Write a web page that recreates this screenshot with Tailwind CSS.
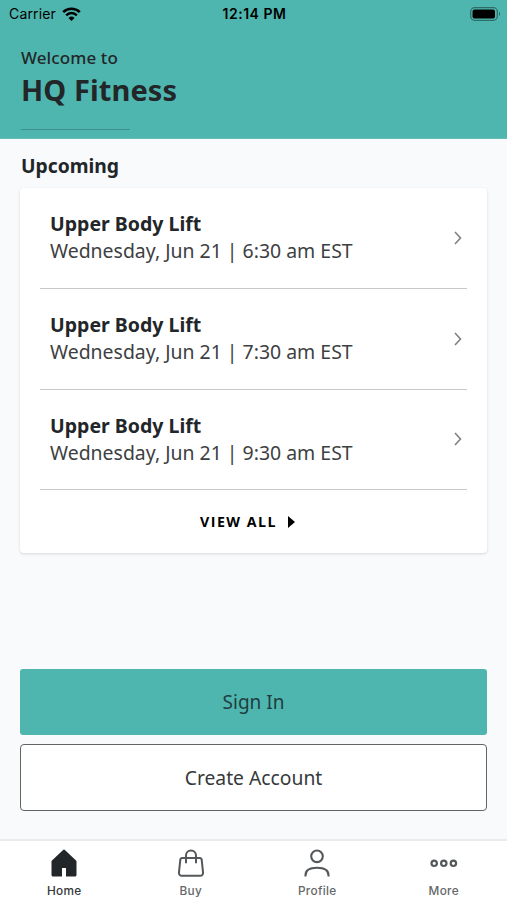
<!DOCTYPE html>
<html lang="en">
<head>
<meta charset="utf-8">
<title>HQ Fitness</title>
<script src="https://cdn.jsdelivr.net/npm/@tailwindcss/browser@4"></script>
</head>
<body class="w-[507px] h-[900px] overflow-hidden bg-[#f8fafb] font-['Noto_Sans',sans-serif] text-[#222629] flex flex-col">
  <header class="h-[139px] shrink-0 bg-[#4fb6af] flex flex-col border-b border-[#64bdb8]">
    <div class="h-7 grid grid-cols-3 items-center pl-[9px] pr-[6px] text-black font-['Inter',sans-serif] text-[14px] leading-7">
      <div class="flex items-center gap-[6px]">
        <span class="tracking-[0.15px]">Carrier</span>
        <svg class="w-[19px] h-[14px]" viewBox="0 0 19 14"><g fill="none" stroke="#000" stroke-width="2.5"><path d="M1.2 5.1a11.8 11.8 0 0 1 16.6 0"/><path d="M4.2 8.3a7.5 7.5 0 0 1 10.6 0"/></g><path d="M9.5 14 6.5 10.9a4.3 4.3 0 0 1 6 0Z"/></svg>
      </div>
      <span class="text-center font-semibold tracking-[0.5px] -ml-[1px]">12:14 PM</span>
      <svg class="w-[31px] h-[14px] justify-self-end" viewBox="0 0 31 14"><rect x=".7" y=".7" width="26.6" height="12.6" rx="4" fill="none" stroke="#000" stroke-opacity=".4" stroke-width="1.3"/><rect x="2.5" y="2.5" width="22.5" height="9" rx="2"/><path d="M29 4.8q2 2.2 0 4.4Z" fill-opacity=".45"/></svg>
    </div>
    <div class="px-[21px] pt-[18px]">
      <p class="text-[17px] leading-6 font-medium tracking-[0.1px]">Welcome to</p>
      <h1 class="text-[29px] leading-10 font-bold tracking-[0.1px]">HQ Fitness</h1>
      <div class="w-[109px] h-px mt-[19px] bg-[#3e918e]"></div>
    </div>
  </header>
  <main class="flex-1 flex flex-col px-5">
    <h2 class="h-[49px] pl-px pt-[13px] text-[19.3px] leading-7 font-bold">Upcoming</h2>
    <section class="h-[365px] shrink-0 bg-white rounded-[4px] px-5 shadow-[0_1px_3px_rgba(0,0,0,0.14)]">
      <div class="h-[101px] border-b border-[#c8c9ca] pl-[10px] pr-[5px] flex items-center justify-between">
        <div class="pb-[2px]"><h3 class="text-[19.5px] leading-[27px] font-bold">Upper Body Lift</h3><p class="text-[19.45px] leading-[27px] text-[#3d4042]">Wednesday, Jun 21 | 6:30 am EST</p></div>
        <svg class="w-2 h-[14px]" viewBox="0 0 8 14" fill="none" stroke="#7e8081" stroke-width="1.6"><path d="m1 1 5.5 6L1 13"/></svg>
      </div>
      <div class="h-[100.5px] border-b border-[#c8c9ca] pl-[10px] pr-[5px] flex items-center justify-between">
        <div class="pb-[2px]"><h3 class="text-[19.5px] leading-[27px] font-bold">Upper Body Lift</h3><p class="text-[19.45px] leading-[27px] text-[#3d4042]">Wednesday, Jun 21 | 7:30 am EST</p></div>
        <svg class="w-2 h-[14px]" viewBox="0 0 8 14" fill="none" stroke="#7e8081" stroke-width="1.6"><path d="m1 1 5.5 6L1 13"/></svg>
      </div>
      <div class="h-[100.5px] border-b border-[#c8c9ca] pl-[10px] pr-[5px] flex items-center justify-between">
        <div class="pb-px"><h3 class="text-[19.5px] leading-[27px] font-bold">Upper Body Lift</h3><p class="text-[19.45px] leading-[27px] text-[#3d4042]">Wednesday, Jun 21 | 9:30 am EST</p></div>
        <svg class="w-2 h-[14px]" viewBox="0 0 8 14" fill="none" stroke="#7e8081" stroke-width="1.6"><path d="m1 1 5.5 6L1 13"/></svg>
      </div>
      <div class="h-[63px] pl-[160px] flex items-center gap-[11px] text-black">
        <span class="text-[14.2px] tracking-[1.5px] font-bold font-['Open_Sans',sans-serif]">VIEW ALL</span>
        <svg class="w-[7px] h-3" viewBox="0 0 7 12"><path d="M0 0 7 6 0 12Z"/></svg>
      </div>
    </section>
    <div class="mt-auto mb-[28px] flex flex-col gap-[9px]">
      <button class="h-[66px] rounded-[3px] bg-[#4fb6af] text-[19px] text-[#203d40]">Sign In</button>
      <button class="h-[67px] rounded-[4px] bg-white border border-[#626466] pt-px text-[19.3px] text-[#36393b]">Create Account</button>
    </div>
  </main>
  <nav class="h-[61px] shrink-0 bg-white border-t-2 border-[#e9ebec] grid grid-cols-4 font-['Inter',sans-serif] text-[11.8px] font-medium text-[#65686a] pl-[1px]">
    <div class="flex flex-col items-center pt-[8px]">
      <svg class="w-[26px] h-7" viewBox="0 0 26 28"><path d="M13 .5q.5 0 .9.5L25 11.5q.5.5.5 1.4V26q0 1.5-1.5 1.5H15V19h-4v8.5H2Q.5 27.5.5 26V12.9q0-.9.5-1.4L12.1 1q.4-.5.9-.5Z" fill="#222629"/></svg>
      <span class="leading-4 mt-[6px] text-[#35383a] tracking-[0.3px]">Home</span>
    </div>
    <div class="flex flex-col items-center pt-[8px]">
      <svg class="w-[26px] h-7" viewBox="0 0 26 28" fill="none" stroke="#55585a" stroke-width="2" stroke-linecap="round" stroke-linejoin="round"><path d="M4.3 9h17.4q1.8 0 2 1.8l1.3 12.4q.3 3.5-3 3.5H4q-3.300 0-3-3.500L2.300 10.800Q2.500 9 4.300 9ZM8 13.500V6.500a5 5 0 0 1 10 0v7"/></svg>
      <span class="leading-4 mt-[6px] tracking-[0.3px]">Buy</span>
    </div>
    <div class="flex flex-col items-center pt-[8px]">
      <svg class="w-[26px] h-7" viewBox="0 0 26 28" fill="none" stroke="#55585a" stroke-width="2.1"><circle cx="13" cy="7.3" r="5.8"/><path d="M1.5 27.5v-1.2C1.5 21 6 18.8 13 18.8s11.5 2.2 11.5 7.5v1.2"/></svg>
      <span class="leading-4 mt-[6px] tracking-[0.3px]">Profile</span>
    </div>
    <div class="flex flex-col items-center pt-[8px]">
      <svg class="w-7 h-7" viewBox="0 0 28 28" fill="none" stroke="#55585a" stroke-width="2.2"><circle cx="4.2" cy="14.3" r="2.7"/><circle cx="13.8" cy="14.3" r="2.7"/><circle cx="23.4" cy="14.3" r="2.7"/></svg>
      <span class="leading-4 mt-[6px] tracking-[0.3px]">More</span>
    </div>
  </nav>
</body>
</html>
